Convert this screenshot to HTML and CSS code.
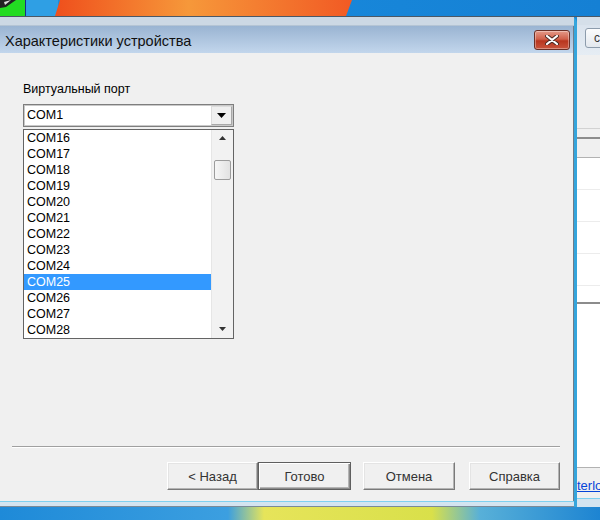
FILE: index.html
```html
<!DOCTYPE html>
<html>

<head>
  <title>Характеристики устройства</title>
  <link rel="stylesheet" href="styles.css">
</head>

<body>
  <div class="desk-top">
    <svg width="600" height="16" viewBox="0 0 600 16">
      <defs>
        <linearGradient id="orange" x1="0" x2="1" y1="0" y2="0">
          <stop offset="0" stop-color="#ef4f1c" />
          <stop offset="0.45" stop-color="#f6983a" />
          <stop offset="1" stop-color="#f15a24" />
        </linearGradient>
        <linearGradient id="sky" x1="0" x2="1" y1="0" y2="0">
          <stop offset="0" stop-color="#1b8fe0" />
          <stop offset="1" stop-color="#1580d4" />
        </linearGradient>
      </defs>
      <rect x="0" y="0" width="600" height="16" fill="url(#sky)" />
      <rect x="26" y="0" width="32" height="16" fill="#2f9fe4" />
      <polygon points="60,0 352,0 346,16 55,16" fill="url(#orange)" />
      <rect x="0" y="0" width="25" height="16" fill="#22dc22" />
      <rect x="25" y="0" width="1" height="16" fill="#1c2a8a" />
      <polygon points="0,0 16,0 6,7 0,8" fill="#222" />
      <polygon points="4,2 11,0 5,5" fill="#ddd" />
    </svg>
  </div>

  <div class="main">
    <div class="window">
      <div class="frame-top"></div>
      <div class="titlebar">
        <span class="title">Характеристики устройства</span>
        <div class="close">
          <svg width="14" height="10" viewBox="0 0 14 10">
            <path d="M2 1 L12 9 M12 1 L2 9" stroke="#4a2a24" stroke-width="4" stroke-linecap="round" />
            <path d="M2 1 L12 9 M12 1 L2 9" stroke="#fff" stroke-width="2.2" stroke-linecap="round" />
          </svg>
        </div>
      </div>

      <div class="client">
        <div class="content">
          <div class="label">Виртуальный порт</div>
          <div class="combo">
            <span class="combo-value">COM1</span>
            <span class="combo-btn">
              <svg width="9" height="5" viewBox="0 0 9 5"><polygon points="0,0 9,0 4.5,5" fill="#000" /></svg>
            </span>
          </div>
          <div class="list">
            <div class="items">
              <div class="item">COM16</div>
              <div class="item">COM17</div>
              <div class="item">COM18</div>
              <div class="item">COM19</div>
              <div class="item">COM20</div>
              <div class="item">COM21</div>
              <div class="item">COM22</div>
              <div class="item">COM23</div>
              <div class="item">COM24</div>
              <div class="item selected">COM25</div>
              <div class="item">COM26</div>
              <div class="item">COM27</div>
              <div class="item">COM28</div>
            </div>
            <div class="scrollbar">
              <div class="arrow">
                <svg width="7" height="4" viewBox="0 0 7 4"><polygon points="3.5,0 7,4 0,4" fill="#333" /></svg>
              </div>
              <div class="thumb"></div>
              <div class="track"></div>
              <div class="arrow">
                <svg width="7" height="4" viewBox="0 0 7 4"><polygon points="0,0 7,0 3.5,4" fill="#333" /></svg>
              </div>
            </div>
          </div>
        </div>

        <div class="footer">
          <div class="separator"></div>
          <div class="buttons">
            <button class="btn btn-back">&lt; Назад</button>
            <button class="btn btn-default">Готово</button>
            <button class="btn btn-cancel">Отмена</button>
            <button class="btn btn-help">Справка</button>
          </div>
        </div>
      </div>
      <div class="frame-bottom"></div>
    </div>

    <div class="side">
      <div class="side-band"></div>
      <div class="side-title">
        <span class="side-btn">c</span>
      </div>
      <div class="side-panel"></div>
      <div class="side-rule light"></div>
      <div class="side-gap"></div>
      <div class="side-rule dark"></div>
      <div class="side-gap tall"></div>
      <div class="side-rule mid"></div>
      <div class="side-table">
        <div class="side-row"></div>
        <div class="side-row"></div>
        <div class="side-row"></div>
        <div class="side-row"></div>
      </div>
      <div class="side-rule dark"></div>
      <div class="side-blank"></div>
      <div class="side-rule mid"></div>
      <div class="side-link"><a href="#">terlo</a></div>
      <div class="side-bottom"></div>
    </div>
  </div>

  <div class="desk-bottom"></div>
</body>

</html>
```

FILE: styles.css
```css
body {
  margin: 0;
  width: 600px;
  height: 520px;
  overflow: hidden;
  font-family: "Liberation Sans", Arial, sans-serif;
  background: #1b8ad8;
}

.desk-top {
  height: 16px;
  border-bottom: 1px solid #4b5866;
}

.desk-top svg {
  display: block;
}

.main {
  display: flex;
  height: 490px;
}

/* Dialog window */
.window {
  width: 574px;
  display: flex;
  flex-direction: column;
  border-right: 3px solid #35a5dc;
  border-top-right-radius: 6px;
  background: #cbd7e3;
}

.frame-top {
  height: 8px;
  background: #ccd8e4;
  border-bottom: 1px solid #b4c4d4;
}

.titlebar {
  height: 27px;
  display: flex;
  align-items: flex-start;
  justify-content: space-between;
  background: linear-gradient(#9ab4d2, #c2d6ec);
  border-right: 1px solid #6d7c8a;
}

.title {
  font-size: 14.5px;
  color: #111;
  padding: 7px 0 0 5px;
}

.close {
  width: 34px;
  height: 18px;
  margin: 4px 3px 0 0;
  border: 1px solid #6a3026;
  border-radius: 3px;
  background: linear-gradient(#e49a88, #d0604a 45%, #b8361f 55%, #c9543c);
  box-shadow: inset 0 0 0 1px rgba(255, 255, 255, 0.35);
  display: flex;
  align-items: center;
  justify-content: center;
}

.client {
  height: 450px;
  background: #f0f0f0;
  border-right: 1px solid #6d7c8a;
  display: flex;
  flex-direction: column;
}

.content {
  padding: 28px 0 0 23px;
  font-size: 12.5px;
  color: #000;
}

.label {
  height: 16px;
  line-height: 16px;
  margin-bottom: 7px;
}

.combo {
  box-sizing: border-box;
  width: 211px;
  height: 23px;
  border: 1px solid #7e7e7e;
  box-shadow: inset 0 0 0 1px #c9c9c9;
  background: #fff;
  display: flex;
  align-items: center;
  justify-content: space-between;
}

.combo-value {
  padding-left: 3px;
}

.combo-btn {
  box-sizing: border-box;
  width: 21px;
  height: 19px;
  margin-right: 1px;
  background: #efefef;
  border: 1px solid #dcdcdc;
  border-right-color: #a8a8a8;
  border-bottom-color: #a8a8a8;
  display: flex;
  align-items: center;
  justify-content: center;
}

.list {
  box-sizing: border-box;
  width: 211px;
  height: 210px;
  margin-top: 2px;
  border: 1px solid #646464;
  background: #fff;
  display: flex;
}

.items {
  flex: 1;
}

.item {
  height: 16px;
  line-height: 16px;
  padding-left: 3px;
}

.item.selected {
  background: #3399ff;
  color: #fff;
}

.scrollbar {
  width: 21px;
  background: #f2f2f2;
  border-left: 1px solid #e6e6e6;
  display: flex;
  flex-direction: column;
  align-items: center;
}

.arrow {
  height: 17px;
  width: 100%;
  display: flex;
  align-items: center;
  justify-content: center;
}

.thumb {
  box-sizing: border-box;
  width: 17px;
  height: 20px;
  margin-top: 13px;
  border: 1px solid #9c9c9c;
  border-radius: 2px;
  background: linear-gradient(90deg, #f6f6f6, #e2e2e2);
}

.track {
  flex: 1;
}

/* Wizard footer */
.footer {
  margin-top: auto;
  padding-bottom: 11px;
}

.separator {
  margin-left: 12px;
  width: 548px;
  border-top: 1px solid #a0a0a0;
  border-bottom: 1px solid #fff;
}

.buttons {
  display: flex;
  padding-left: 167px;
  margin-top: 14px;
}

.btn {
  box-sizing: border-box;
  height: 28px;
  font-family: "Liberation Sans", Arial, sans-serif;
  font-size: 13px;
  color: #333;
  background: #f0f0f0;
  border: 1px solid;
  border-color: #fff #7a7a7a #7a7a7a #fff;
  box-shadow: inset -1px -1px 0 #b4b4b4, inset 1px 1px 0 #e4e4e4;
  padding: 0;
}

.btn-back {
  width: 91px;
}

.btn-default {
  width: 93px;
  border: 1px solid #5f5f5f;
  box-shadow: inset 1px 1px 0 #fff, inset -1px -1px 0 #8a8a8a, inset -2px -2px 0 #b4b4b4;
}

.btn-cancel {
  width: 92px;
  margin-left: 12px;
}

.btn-help {
  width: 91px;
  margin-left: 14px;
}

.frame-bottom {
  height: 4px;
  border-top: 1px solid #7fd0ef;
  background: #d3e4f0;
  border-bottom: 1px solid #7a8a98;
}

/* Window behind, on the right */
.side {
  width: 23px;
  display: flex;
  flex-direction: column;
  overflow: hidden;
  background: #f0f0f0;
}

.side-band {
  height: 8px;
  background: #d5dfe9;
}

.side-title {
  height: 30px;
  background: linear-gradient(#dae3ed, #e6edf4);
}

.side-btn {
  display: block;
  box-sizing: border-box;
  width: 30px;
  height: 20px;
  margin: 3px 0 0 8px;
  border: 1px solid #8d9cac;
  border-radius: 3px;
  background: linear-gradient(#fbfcfd, #e3e8ee);
  font-size: 12px;
  line-height: 18px;
  padding-left: 8px;
  color: #333;
}

.side-panel {
  height: 73px;
}

.side-rule {
  height: 1px;
}

.side-rule.light {
  background: #d2d2d2;
}

.side-rule.dark {
  height: 2px;
  background: #8c8c8c;
}

.side-rule.mid {
  background: #b2b2b2;
}

.side-gap {
  height: 8px;
}

.side-gap.tall {
  height: 18px;
}

.side-table {
  height: 144px;
  background: #fff;
}

.side-row {
  height: 31px;
  border-bottom: 1px solid #ececec;
}

.side-blank {
  height: 163px;
  background: #fff;
}

.side-link {
  height: 30px;
  padding-top: 6px;
  box-sizing: border-box;
  font-size: 13px;
  line-height: 24px;
  white-space: nowrap;
}

.side-link a {
  color: #0645d8;
}

.side-bottom {
  flex: 1;
  border-top: 1px solid #7fd0ef;
  background: #d3e4f0;
}

.desk-bottom {
  height: 13px;
  background: linear-gradient(90deg, #1e8ad8 0, #3c9fe0 38%, #e6e45a 44%, #d9e04a 72%, #58b0d8 80%, #1d84d2 100%);
}
```
